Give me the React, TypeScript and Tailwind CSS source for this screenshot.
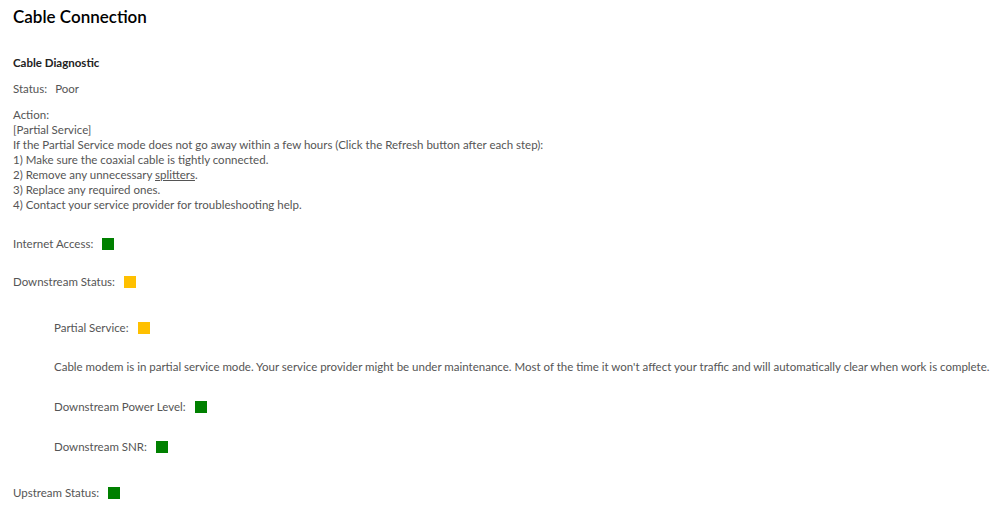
import React from "react";

function Dot({ color }: { color: "green" | "yellow" }) {
  return (
    <span
      className={
        "inline-block w-[12px] h-[12px] ml-[9px] " +
        (color === "green" ? "bg-[#008000]" : "bg-[#ffc000]")
      }
    />
  );
}

function Row({ label, color, className = "" }: { label: string; color: "green" | "yellow"; className?: string }) {
  return (
    <div className={"flex items-center h-[15px] " + className}>
      <span>{label}</span>
      <Dot color={color} />
    </div>
  );
}

export default function App() {
  return (
    <div className="min-h-screen bg-white px-[13px] pt-[7px] font-['Segoe_UI','Lato',sans-serif] text-[11.5px] leading-[15px] text-[#555]">
      <h1 className="text-[17px] leading-[20px] font-semibold text-black">Cable Connection</h1>

      <h2 className="mt-[28px] font-bold text-[#222]">Cable Diagnostic</h2>

      <div className="mt-[11px] flex gap-[8px]">
        <span>Status:</span>
        <span>Poor</span>
      </div>

      <div className="mt-[11px]">
        <div>Action:</div>
        <div>[Partial Service]</div>
        <div>If the Partial Service mode does not go away within a few hours (Click the Refresh button after each step):</div>
        <div>1) Make sure the coaxial cable is tightly connected.</div>
        <div>
          2) Remove any unnecessary <span className="underline">splitters</span>.
        </div>
        <div>3) Replace any required ones.</div>
        <div>4) Contact your service provider for troubleshooting help.</div>
      </div>

      <Row label="Internet Access:" color="green" className="mt-[24px]" />
      <Row label="Downstream Status:" color="yellow" className="mt-[23px]" />

      <div className="pl-[41px]">
        <Row label="Partial Service:" color="yellow" className="mt-[31px]" />
        <p className="mt-[24px] whitespace-nowrap">
          Cable modem is in partial service mode. Your service provider might be under maintenance. Most of the time it won't affect your traffic and will automatically clear when work is complete.
        </p>
        <Row label="Downstream Power Level:" color="green" className="mt-[25px]" />
        <Row label="Downstream SNR:" color="green" className="mt-[25px]" />
      </div>

      <Row label="Upstream Status:" color="green" className="mt-[31px]" />
    </div>
  );
}
